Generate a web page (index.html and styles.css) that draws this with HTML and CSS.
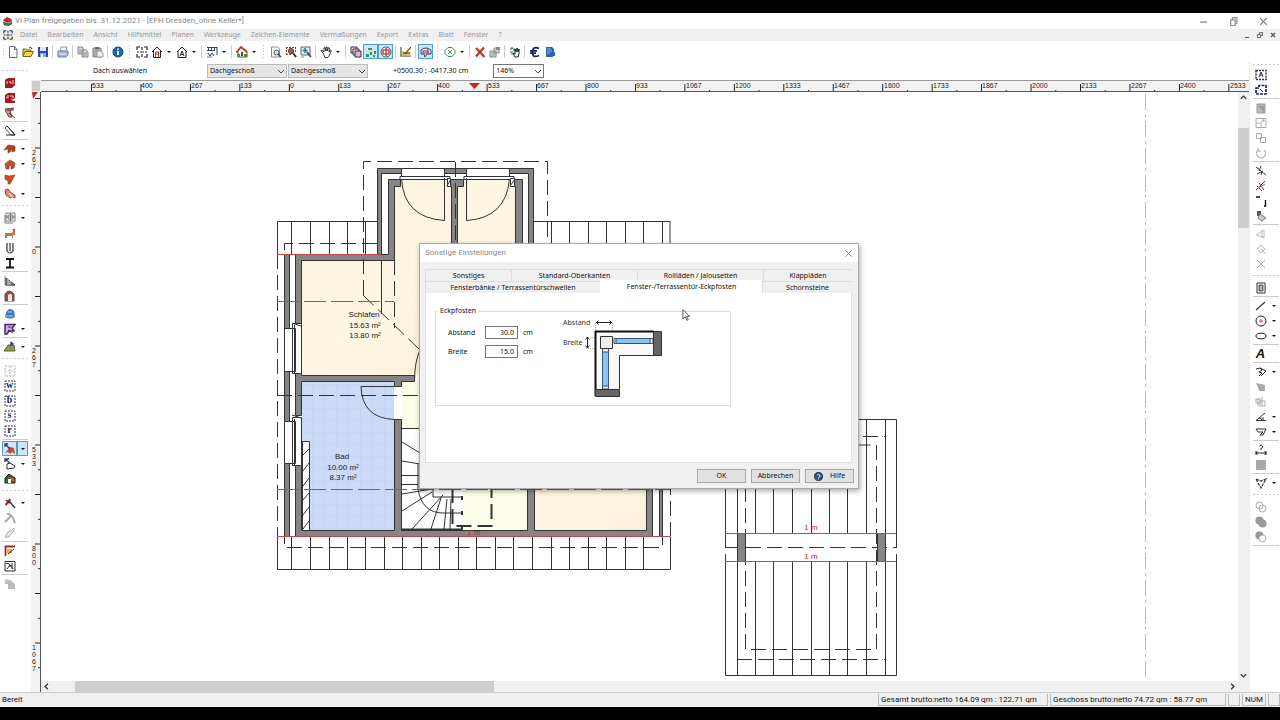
FILE: index.html
```html
<!DOCTYPE html>
<html lang="de">
<head>
<meta charset="utf-8">
<title>Vi Plan</title>
<link rel="stylesheet" href="styles.css">
</head>
<body>
<svg class="defs" aria-hidden="true">
  <symbol id="chev" viewBox="0 0 8 8"><path d="M1 3l3 3 3-3" fill="none" stroke="#444" stroke-width="1"/></symbol>
  <symbol id="page" viewBox="0 0 12 12"><path d="M2.500 .5h5l2.500 3v8h-7.500z" fill="#fff" stroke="#556a95"/><path d="M7.500 .5v3h2.500" fill="none" stroke="#556a95"/></symbol>
  <symbol id="dash" viewBox="0 0 12 12"><rect x="1" y="1" width="10" height="10" fill="#fff" stroke="#335" stroke-dasharray="2 1"/></symbol>
  <symbol id="plan" viewBox="0 0 12 12"><path d="M1 4V1h3M8 1h3v3M11 8v3H8M4 11H1V8M4 6h4M6 1v3M6 8v3M1 6h2M9 6h2" fill="none" stroke="#222" stroke-width="1.200"/></symbol>
</svg>

<div class="app">
  <header class="titlebar">
    <svg class="logo" viewBox="0 0 12 12"><path d="M1 5l4-4 5 2 1 3-4 1z" fill="#b63a2b"/><path d="M1 6l6 2 4-2v3l-4 2-5-1z" fill="#4c6b50"/><path d="M2 5l5 2" stroke="#333"/></svg>
    <h1 class="title">Vi Plan freigegeben bis: 31.12.2021 - [EFH Dresden_ohne Keller*]</h1>
    <div class="wincontrols">
      <button aria-label="Minimieren"><svg viewBox="0 0 8 8"><path d="M1 4.500h6" stroke="#777" fill="none"/></svg></button>
      <button aria-label="Wiederherstellen"><svg viewBox="0 0 8 8"><path d="M1.500 2.500h4v5h-4zM3 2.500v-2h4v5H5.500" stroke="#888" fill="none"/></svg></button>
      <button aria-label="Schließen"><svg viewBox="0 0 8 8"><path d="M1 1l6 6M7 1L1 7" stroke="#777" fill="none"/></svg></button>
    </div>
  </header>

  <nav class="menubar">
    <svg class="docicon"><use href="#plan"/></svg>
    <button>Datei</button><button>Bearbeiten</button><button>Ansicht</button><button>Hilfsmittel</button><button>Planen</button><button>Werkzeuge</button><button>Zeichen-Elemente</button><button>Vermaßungen</button><button>Export</button><button>Extras</button><button>Blatt</button><button>Fenster</button><button>?</button>
    <div class="childcontrols">
      <button aria-label="Dokument minimieren"><svg viewBox="0 0 8 8"><path d="M2 6.500h4" stroke="#556"/></svg></button>
      <button aria-label="Dokument wiederherstellen"><svg viewBox="0 0 8 8"><path d="M1.500 3.500h3v3h-3zM3.500 3V1.500h3v3H5" stroke="#667" fill="none"/></svg></button>
      <button aria-label="Dokument schließen"><svg viewBox="0 0 8 8"><path d="M2 2l4 4M6 2L2 6" stroke="#556" fill="none" stroke-width="1.300"/></svg></button>
    </div>
  </nav>

  <div class="toolbar" role="toolbar" aria-label="Standard">
    <i class="grip first"></i>
    <button class="t" aria-label="Neu"><svg><use href="#page"/></svg></button>
    <button class="t" aria-label="Öffnen"><svg viewBox="0 0 12 12"><path d="M1 10V3h3l1 1h4v2" fill="#e8d06a" stroke="#75651e"/><path d="M1 10.500l2-5h8.500l-2.500 5z" fill="#f3d94c" stroke="#75651e"/><path d="M7 2q2-2 3 1" fill="none" stroke="#333"/></svg></button>
    <button class="t" aria-label="Speichern"><svg viewBox="0 0 12 12"><path d="M1 1h10v10H1z" fill="#3347b4"/><path d="M3 1h6v4H3z" fill="#dfe6f5"/><path d="M3 7h6v4H3z" fill="#8fa3dc"/><path d="M4 8h2v3H4z" fill="#fff"/></svg></button>
    <i class="sep"></i>
    <button class="t" aria-label="Drucken"><svg viewBox="0 0 12 12"><path d="M4 1h6l-1 4H3z" fill="#fff" stroke="#8895ab"/><path d="M1 5h10v4l-2 2H1z" fill="#a9b6d2" stroke="#74819d"/><path d="M2 8h7" stroke="#eef"/></svg></button>
    <i class="sep"></i>
    <button class="t" aria-label="Kopieren"><svg viewBox="0 0 12 12"><path d="M1 1h4l1 1v6H1zM5 4h4l2 2v5H5z" fill="#ddd" stroke="#888"/><path d="M2 4h3M2 6h2M6 7h4M6 9h4" stroke="#888"/></svg></button>
    <button class="t" aria-label="Einfügen"><svg viewBox="0 0 12 12"><path d="M1 2h8v9H1z" fill="#aaa" stroke="#888"/><path d="M3 1h4v2H3z" fill="#666"/><path d="M5 5h4l2 2v4H5z" fill="#eee" stroke="#999"/></svg></button>
    <i class="sep"></i>
    <button class="t" aria-label="Info"><svg viewBox="0 0 12 12"><circle cx="6" cy="6" r="5" fill="#1768b4" stroke="#0e3f80"/><path d="M6 5v4M6 2.500v1.300" stroke="#fff" stroke-width="1.800"/></svg></button>
    <i class="grip"></i>
    <button class="t" aria-label="Grundriss"><svg><use href="#plan"/></svg></button>
    <button class="t" aria-label="Gebäude"><svg viewBox="0 0 12 12"><path d="M1 6l5-5 5 5M2.500 5v6.500h7V5" fill="none" stroke="#222"/><path d="M4.500 11V6h3v5M4.500 8h3" fill="none" stroke="#a33"/></svg></button><i class="dd"></i>
    <button class="t" aria-label="Ansicht A"><svg viewBox="0 0 12 12"><path d="M1 6l5-5 5 5M2 5v6.500h8V5" fill="none" stroke="#222"/><path d="M4 10l2-5 2 5M5 8.500h2" fill="none" stroke="#222"/></svg></button><i class="dd"></i>
    <i class="sep"></i>
    <button class="t" aria-label="Fensterliste"><svg viewBox="0 0 12 12"><path d="M1 1.500h10M1 4.500h8M2.500 2v3M5.500 2v3M8.500 2v3M11 1v8" stroke="#333d60" fill="none"/><path d="M2 7l2 3 2-3 2 3" stroke="#333d60" fill="none"/><path d="M1 11h5" stroke="#777"/></svg></button><i class="dd"></i>
    <i class="sep"></i>
    <button class="t" aria-label="3D Haus"><svg viewBox="0 0 12 12"><path d="M0 6l5-5 6 5v5H2V6z" fill="#fff" stroke="#833"/><path d="M1 6l4-5 6 5" fill="none" stroke="#b33a2b" stroke-width="1.800"/><path d="M1 8h3v3H1zM8 8h3v3H8z" fill="#3f9a3f"/><path d="M5 6h2v4H5z" fill="#6a4526"/></svg></button><i class="dd"></i>
    <i class="grip"></i>
    <button class="t" aria-label="Blatt zoomen"><svg viewBox="0 0 12 12"><path d="M1.500 1h6l2 2v8h-8z" fill="#fff" stroke="#889"/><circle cx="6.500" cy="6.500" r="2.500" fill="#cfe0ea" stroke="#456"/><path d="M8 8l3 3" stroke="#345" stroke-width="1.500"/></svg></button>
    <button class="t" aria-label="Bereich zoomen"><svg viewBox="0 0 12 12"><path d="M1 1.500h10M1 8.500h6M1.500 1v8M10.500 1v6" stroke="#a33" stroke-dasharray="2 1"/><circle cx="6" cy="5" r="2.500" fill="#b55" stroke="#522"/><path d="M8 7l3 4" stroke="#333" stroke-width="2"/></svg></button>
    <button class="t" aria-label="Alles zoomen"><svg viewBox="0 0 12 12"><path d="M1 1h9v8H1z" fill="#e5eef8" stroke="#567"/><path d="M5 2v5M2.500 4.500h5" stroke="#247d67" stroke-width="1.500"/><path d="M7 6l4 5" stroke="#334d9a" stroke-width="2"/><path d="M1 11h3" stroke="#a90"/></svg></button>
    <i class="sep"></i>
    <button class="t" aria-label="Verschieben"><svg viewBox="0 0 12 12"><path d="M3 7L1 4.500l1-.5 2 2V2l1-.5L6 5V1h1.200v4L8.500 1.500l1 .5-.5 4 1.500-2 .8.500L9 10l-1 1.500H5z" fill="#fff" stroke="#222" stroke-width=".9"/></svg></button><i class="dd"></i>
    <i class="sep"></i>
    <button class="t" aria-label="Ebenen"><svg viewBox="0 0 12 12"><path d="M1 1h6v6H1z" fill="#e6dbe6" stroke="#424"/><path d="M3 3h6v6H3z" fill="#f4eaf4" stroke="#424"/><path d="M5 5h6v6H5z" fill="#c9bdd5" stroke="#424"/></svg></button>
    <button class="t on" aria-label="Punkte"><svg viewBox="0 0 12 12"><path d="M3 2h4v2H3zM1 8h3v3H1zM5 6h2v3H5zM9 5h2v3H9zM8 9h2v2H8z" fill="#35965a"/></svg></button>
    <button class="t on" aria-label="Objektfang"><svg viewBox="0 0 12 12"><circle cx="6" cy="6" r="5" fill="#fff" stroke="#555"/><path d="M3 4h6v4H3zM6 2v8" fill="none" stroke="#a22" stroke-width="1.200"/></svg></button>
    <i class="sep"></i>
    <button class="t" aria-label="Farben"><svg viewBox="0 0 12 12"><path d="M1 1v9h10" fill="none" stroke="#777" stroke-width="1.500"/><path d="M2 9V5l3 1 5-5 1 1-4 5 4-1-1 4z" fill="#e1c348"/><path d="M5 8l6-7M3 7h7" stroke="#333"/></svg></button>
    <i class="sep"></i>
    <button class="t on" aria-label="Hilfslinien"><svg viewBox="0 0 12 12"><path d="M1 4q5-4 10 0v4H7L5 11 4 8H1z" fill="#dfe3ef" stroke="#334178"/><path d="M3 5h5v2H3zM8 3v5" fill="none" stroke="#a33"/></svg></button>
    <i class="grip"></i>
    <button class="t" aria-label="Prüfen"><svg viewBox="0 0 12 12"><path d="M4 1.500h4l3 3v3l-3 3H4l-3-3v-3z" fill="#fff" stroke="#3d9447"/><path d="M4 4l4 4M8 4L4 8" stroke="#3d9447"/></svg></button><i class="dd"></i>
    <i class="sep"></i>
    <button class="t" aria-label="Löschen"><svg viewBox="0 0 12 12"><path d="M2 2l8.500 9M10 1.500L2 10.500" stroke="#c3342b" stroke-width="2.200"/></svg></button>
    <button class="t" aria-label="Eigenschaften"><svg viewBox="0 0 12 12"><path d="M1 5h6v6H1zM5 2h5v5H5z" fill="#ddd" stroke="#888"/><path d="M7 1h4v3H7z" fill="#888"/><path d="M2 7h4M2 9h4" stroke="#999"/></svg></button>
    <i class="sep"></i>
    <button class="t" aria-label="Auswahl"><svg viewBox="0 0 12 12"><path d="M1 3h2M3 1v2M5 2v3M1 6h3M2 8h2" stroke="#367" stroke-width="1.200"/><path d="M6 11L4 7l2 1V3l1 3 1-4 1 4 1-3v5l-1 3z" fill="#fff" stroke="#222"/></svg></button>
    <i class="sep"></i>
    <button class="t" aria-label="Kosten"><svg viewBox="0 0 12 12"><path d="M10 2.500Q4-.5 3.500 6T10 9.500M1 4.800h7M1 7.200h6" fill="none" stroke="#20206f" stroke-width="1.800"/></svg></button>
    <button class="t" aria-label="Bericht"><svg viewBox="0 0 12 12"><path d="M2 1h6l2 2v3h1v4H9v1H2z" fill="#2d64ac"/><path d="M3 3h4M3 5h5M3 7h3" stroke="#8db3df"/></svg></button>
  </div>

  <main class="work">
    <aside class="side left" aria-label="Bauteile">
      <i class="vgrip"></i>
      <button class="v" aria-label="Geschoss 1"><svg viewBox="0 0 12 12"><path d="M1 3l3-2h7v7l-3 3H1z" fill="#a71822"/><path d="M3 4v3M5 5h2v2M9 3v4" stroke="#f4c9c9" fill="none"/></svg></button>
      <button class="v" aria-label="Geschoss 2"><svg viewBox="0 0 12 12"><path d="M1 3l3-2h7v5l-4 2 4 1v2H1z" fill="#a71822"/><path d="M2 5l2 1V3M6 4h3v2" stroke="#f4c9c9" fill="none"/></svg></button>
      <button class="v" aria-label="Treppenhaus"><svg viewBox="0 0 12 12"><path d="M1 2l9-1-4 3 2 6H5L2 5z" fill="#c8907a" stroke="#555"/><path d="M3 3l7 0M5 6l6 5" stroke="#7a2a20"/></svg></button>
      <i class="vsep"></i>
      <button class="v" aria-label="Wand"><svg viewBox="0 0 12 12"><path d="M1 3l2-2 7 7 1 2H7z" fill="#fff" stroke="#555"/><path d="M3 1l8 9H2" fill="none" stroke="#222"/></svg></button><i class="dd"></i>
      <i class="vsep"></i>
      <button class="v" aria-label="Dach"><svg viewBox="0 0 12 12"><path d="M0 7l4-5 7 1v5L8 9V6L6 9 4 10V6z" fill="#b53a23" stroke="#642" stroke-width=".6"/></svg></button><i class="dd"></i>
      <button class="v" aria-label="Gaube"><svg viewBox="0 0 12 12"><path d="M1 6l5-4 5 3-1 5-3 1V7l-2 1v3H2z" fill="#c5532b" stroke="#6c3420" stroke-width=".6"/></svg></button><i class="dd"></i>
      <button class="v" aria-label="Dachfläche"><svg viewBox="0 0 12 12"><path d="M1 2l4 1 6-1-5 9H4V8L1 6z" fill="#d24a20" stroke="#93300f" stroke-width=".6"/></svg></button>
      <button class="v" aria-label="Dachöffnung"><svg viewBox="0 0 12 12"><path d="M1 2l3-1 3 4 4 2v3l-3-1-2 1-4-3z" fill="#d48d78" stroke="#b04629"/><path d="M5 5l4 5" stroke="#fff"/></svg></button><i class="dd"></i>
      <i class="vgrip"></i>
      <button class="v" aria-label="Fenster"><svg viewBox="0 0 12 12"><path d="M2 1h9v8H2zM4 3h5v4H4zM6.500 1v8M2 5h9M1 3v8h8" fill="none" stroke="#777"/></svg></button><i class="dd"></i>
      <button class="v" aria-label="Möbel"><svg viewBox="0 0 12 12"><path d="M1 6h7l3-5v7H9v3H8V9H3v2H1z" fill="#b97a44"/><path d="M8 2h3v3z" fill="#ca3f27"/></svg></button>
      <button class="v" aria-label="Träger"><svg viewBox="0 0 12 12"><path d="M3 1v8q3 4 6 0V1M6 1v8" fill="none" stroke="#333" stroke-width="1.200"/></svg></button>
      <button class="v" aria-label="Stahlträger"><svg viewBox="0 0 12 12"><path d="M2 2h8M2 10.500h8M6 2v9" fill="none" stroke="#111" stroke-width="1.800"/></svg></button>
      <i class="vsep"></i>
      <button class="v" aria-label="Treppe"><svg viewBox="0 0 12 12"><path d="M1 1v9h10" stroke="#777" fill="none"/><path d="M2 10V3l9 7z" fill="#777" stroke="#444"/><path d="M4 10V4M6 10V6" stroke="#ddd"/></svg></button>
      <button class="v" aria-label="Kamin"><svg viewBox="0 0 12 12"><path d="M1 11V4q4-6 9 0v7z" fill="#a34c3b" stroke="#555"/><path d="M4 11V5q2-2 4 0v6z" fill="#f4eeee"/></svg></button>
      <i class="vsep"></i>
      <button class="v" aria-label="Bad"><svg viewBox="0 0 12 12"><path d="M3 3q3-4 7 0l1 6q-5 3-10 0l1-4z" fill="#3979be"/><path d="M4 4h4M2 8h7" stroke="#b4d3f0"/></svg></button>
      <button class="v" aria-label="Umriss"><svg viewBox="0 0 12 12"><path d="M1 1.500h10L8 5l2 3H5l-2 3H1z" fill="#c8b2d7" stroke="#4b2278" stroke-width="1.500"/><path d="M4 4h3M4 7l5 3" stroke="#4b2278"/></svg></button><i class="dd"></i>
      <i class="vsep"></i>
      <button class="v" aria-label="Gelände"><svg viewBox="0 0 12 12"><path d="M0 10l4-6h6l1 6z" fill="#8a9c45" stroke="#655d33"/><path d="M7 1l2 2-3 2M7 1v4" stroke="#4241a0" fill="none" stroke-width="1.500"/></svg></button><i class="dd"></i>
      <i class="vgrip"></i>
      <button class="v" aria-label="Raster"><svg viewBox="0 0 12 12"><path d="M1 1h10v10H1zM6 1v10M1 6h10" fill="none" stroke="#bbb" stroke-dasharray="2 1"/></svg></button>
      <button class="v key" aria-label="w"><svg><use href="#dash"/></svg><b>w</b></button>
      <button class="v key" aria-label="b"><svg><use href="#dash"/></svg><b>b</b></button>
      <button class="v key" aria-label="s"><svg><use href="#dash"/></svg><b>s</b></button>
      <button class="v key" aria-label="r"><svg><use href="#dash"/></svg><b>r</b></button>
      <i class="vsep"></i>
      <button class="v on" aria-label="Dach bearbeiten"><svg viewBox="0 0 12 12"><path d="M1 10l5-6 4 1 1 6-3-2-2 2-2-2z" fill="#cf4632"/><path d="M1 1l5 5M1 4V1h3" stroke="#26377c" stroke-width="1.300" fill="none"/></svg></button><i class="dd on"></i>
      <button class="v" aria-label="Fläche bearbeiten"><svg viewBox="0 0 12 12"><path d="M3 6l3-1 5 3-1 2-7 1z" fill="#fff" stroke="#333"/><path d="M1 1l5 4M1 4V1h4" stroke="#26377c" stroke-width="1.300" fill="none"/></svg></button><i class="dd"></i>
      <button class="v" aria-label="Haus"><svg viewBox="0 0 12 12"><path d="M1 5l4-4 6 4v5H1z" fill="#455c41" stroke="#222"/><path d="M4 6h3v4H4z" fill="#efd"/><path d="M7 5l3 3" stroke="#d55" stroke-width="2"/></svg></button>
      <i class="vgrip"></i>
      <button class="v" aria-label="Hammer"><svg viewBox="0 0 12 12"><path d="M1 7l5-6 1 3-5 5z" fill="#a52b25"/><path d="M6 5l5 6M2 3l4 3" stroke="#333" stroke-width="1.400"/></svg></button><i class="dd"></i>
      <button class="v" aria-label="Werkzeug"><svg viewBox="0 0 12 12"><path d="M1 10l6-6M3 2q5-1 8 9" fill="none" stroke="#aaa" stroke-width="2"/></svg></button>
      <button class="v" aria-label="Verbinden"><svg viewBox="0 0 12 12"><path d="M1 10l3-5 3-1 3-3v3L7 7l-2 3z" fill="#eee" stroke="#aaa"/></svg></button>
      <i class="vsep"></i>
      <button class="v" aria-label="Plan ändern"><svg viewBox="0 0 12 12"><path d="M1.500 11V1.500h9.500" stroke="#a42a1d" stroke-width="1.800" fill="none"/><path d="M3 4h5v4H3z" fill="#e9b43a"/><path d="M4 9l6-5" stroke="#333"/></svg></button>
      <button class="v" aria-label="Textrahmen"><svg viewBox="0 0 12 12"><path d="M1 1.500h10v9.500H1z" fill="#fff" stroke="#333"/><path d="M2 4q4-2 4 3M3 9l3-4 3 4M8 3v6" fill="none" stroke="#222"/></svg></button>
      <i class="vsep"></i>
      <button class="v" aria-label="Gruppe"><svg viewBox="0 0 12 12"><path d="M1 2h5l5 4v5H4V6H1z" fill="#bbb"/><path d="M2 1v4M4 1v3" stroke="#ccc"/></svg></button>
    </aside>

    <section class="center">
      <div class="controls">
        <span class="hint">Dach auswählen</span>
        <label class="pick"><select aria-label="Geschoss"><option>Dachgeschoß</option></select><svg><use href="#chev"/></svg></label>
        <label class="pick"><select aria-label="Sichtbares Geschoss"><option>Dachgeschoß</option></select><svg><use href="#chev"/></svg></label>
        <span class="coords">+0500.30 : -0417.30 cm</span>
        <label class="pick zoom"><select aria-label="Zoom"><option>146%</option></select><svg><use href="#chev"/></svg></label>
      </div>
      <div class="sheet">
        <div class="corner"></div>
        <svg class="hruler">
          <defs><pattern id="ht" x="50" y="0" width="49.450" height="12" patternUnits="userSpaceOnUse"><path d="M.5 3v9M25.200 9v3" stroke="#222" fill="none"/></pattern></defs>
          <rect x="5" width="100%" height="12" fill="url(#ht)"/>
          <g transform="translate(-40 7)"><text x="91">533</text><text x="140">400</text><text x="190">267</text><text x="239">133</text><text x="289">0</text><text x="338">133</text><text x="388">267</text><text x="437">400</text><text x="487">533</text><text x="536">667</text><text x="586">800</text><text x="635">933</text><text x="685">1067</text><text x="734">1200</text><text x="784">1333</text><text x="833">1467</text><text x="883">1600</text><text x="932">1733</text><text x="981">1867</text><text x="1031">2000</text><text x="1080">2133</text><text x="1130">2267</text><text x="1179">2400</text><text x="1229">2533</text></g>
          <path d="M428 2h11l-5.500 6z" fill="#c1272d"/>
        </svg>
        <svg class="vruler">
          <defs><pattern id="vt" x="0" y="6" width="10" height="49.500" patternUnits="userSpaceOnUse"><path d="M4 .5h6M7 25.200h3" stroke="#222" fill="none"/></pattern></defs>
          <rect width="10" height="100%" fill="url(#vt)"/>
          <path d="M1 0h6l-5 7z" fill="#b9323c"/>
          <g transform="translate(0 -92)"><text x="1" y="155">2</text><text x="1" y="162">6</text><text x="1" y="169">7</text><text x="1" y="254">0</text><text x="1" y="353">2</text><text x="1" y="360">6</text><text x="1" y="367">7</text><text x="1" y="452">5</text><text x="1" y="459">3</text><text x="1" y="466">3</text><text x="1" y="551">8</text><text x="1" y="558">0</text><text x="1" y="565">0</text><text x="1" y="650">1</text><text x="1" y="657">0</text><text x="1" y="664">6</text><text x="1" y="671">7</text></g>
        </svg>
        <svg class="drawing" role="img" aria-label="Grundriss Dachgeschoss">
          <defs>
            <linearGradient id="warm" x1="0" y1="0" x2="1" y2="1"><stop offset="0" stop-color="#fcf1dc"/><stop offset=".5" stop-color="#fdf6e3"/><stop offset="1" stop-color="#fbeed9"/></linearGradient>
            <pattern id="tile" width="12" height="12" patternUnits="userSpaceOnUse"><path d="M0 0h12v12H0z" fill="#cbdaf6"/><path d="M0 .5h12M.5 0v12" stroke="#c5d5f3" fill="none"/></pattern>
          </defs>
          <g transform="translate(-41 -92)">
            <path d="M302 260h92v-81h128v70h-90v126H302z" fill="url(#warm)"/>
            <path d="M302 381h92v150h-92z" fill="url(#tile)"/>
            <path d="M401 381h127v150H401z" fill="#fcfde9"/>
            <path d="M534 480h112v51H534z" fill="url(#warm)"/>
            <path d="M401 428h62v103h-62z" fill="#fff"/>
            <path d="M394 387h7v32h-7z" fill="#fff"/>

            <g class="ln">
              <path d="M277.500 254v-32.500h104M291.500 222v32M310.500 222v32M329.500 222v32M347.500 222v32M365.500 222v32"/>
              <path d="M533 221.500h137v30M551.500 222v30M569.500 222v30M588.500 222v30M606.500 222v30M625.500 222v30M643.500 222v30M662.500 222v30"/>
              <path d="M277.500 536v33.500h393v-33"/>
              <path d="M291.500 537v32M310.500 537v32M329.500 537v32M347.500 537v32M365.500 537v32M384.500 537v32M402.500 537v32M421.500 537v32M439.500 537v32M458.500 537v32M476.500 537v32M495.500 537v32M513.500 537v32M532.500 537v32M551.500 537v32M569.500 537v32M588.500 537v32M606.500 537v32M625.500 537v32M643.500 537v32"/>
              <path d="M381.500 180v134"/>
            </g>
            <g class="wall">
              <path d="M377.500 168.500h156v75h-5v-70h-147v82h-4z"/>
              <path d="M388.500 179.500h12v7h-6v74h-93v63h-6v-69h93z"/>
              <path d="M447.500 179.500h16v7h-6v60h-6v-60h-4z"/>
              <path d="M511.500 179.500h11v64h-7v-57h-4z"/>
              <path d="M284.500 254.500h5v74h-5zM284.500 371.500h5v50h-5zM284.500 463.500h5v73h-5z"/>
              <path d="M295.500 373.500v42h6v-34h93v5h7v-5h13v-6h-113v-2z"/>
              <path d="M295.500 465.500h6v65h93v-111h7v111h126v-50h7v50h112v-50h6v56h-357z"/>
              <path d="M659.500 480.500h3v56h-3z"/>
            </g>
            <g class="open">
              <path d="M401.500 168.500h43v9h-43zM466.500 168.500h43v9h-43z"/>
              <path d="M400 176.500h50v3h-50zM464 176.500h50v3h-50z"/>
              <path d="M447.500 178.500h3v8h-3zM510.500 178.500h4v8h-4zM447 186l4-7M510 186l5-7"/>
              <path d="M284.500 328.500h11v43h-11zM292.500 323.500h9v50h-9zM294.500 325v48M284.500 421.500h11v42h-11zM292.500 417.500h9v48h-9zM294.500 419v46M292 323l9 3M292 415l9 3"/>
              <path d="M302.500 441.500h7v89h-7zM303 455l6-6M303 471l6-8M303 486l6-8M303 500l6-7M303 515l6-8M303 529l6-8"/>
            </g>
            <g class="ln">
              <path d="M444.500 178v42.500Q404 218 401.500 179M466.500 178v42.500Q506 218 509.500 179"/>
              <path d="M394 386.500h-33Q362 418 394 419.500M414.500 381q0-20 6-32"/>
              <path d="M402 428.500h18M402 442l18 11M402 461l18 3M402 475.500h18M402 484.500h16M402 494l30-5M402 511l30-19M412 529l31-34M431 529l10-31M444 529l3-30M418 464v25q4 24 25 24h20M450 529l1-30M433 489v8h30"/>
              <path d="M401 529.500h62M462 496v4M462 511v4M462 526v4" stroke-width="2"/>
            </g>
            <g class="dashed">
              <path d="M363.500 295V161.500h184v85M455.500 162v90M377 243.500h-92.500v304h378v-60M277.500 254v283M394.500 260v68M363 295l57 55M277 395.500h143M662.500 250v-7M670.500 480v56"/>
              <path d="M452.500 488v38h39v-38" stroke-width="2"/>
            </g>
            <g class="red"><path d="M277 254.500h104M277 536.500h393"/><path d="M277 301.500h117M277 489.500h393" stroke-dasharray="22 5"/></g>

            <g class="ln">
              <path d="M725.500 533v-113.500h171v114M725.500 562v113.500h171v-114M737.500 420v255M755.500 420v113M773.500 420v113M792.500 420v113M811.500 420v113M829.500 420v113M847.500 420v113M866.500 420v113M885.500 420v255"/>
              <path d="M755.500 562v113M773.500 562v113M792.500 562v113M811.500 562v113M829.500 562v113M847.500 562v113M866.500 562v113"/>
            </g>
            <g class="dashed"><path d="M745.500 445v204.500h131v-204.500zM737 436.500h148M737 659.500h148M725 547.500h172M725.500 533v29M896.500 533v29"/></g>
            <g class="wall"><path d="M737.500 533.500h8v28h-8zM877.500 533.500h8v28h-8z"/></g>
            <g class="red"><path d="M725 533.500h171M725 561.500h171"/></g>
            <path d="M1145.500 94v590" fill="none" stroke="#bbb" stroke-dasharray="16 4 3 4"/>

            <g class="room"><text x="364" y="317">Schlafen</text><text x="365" y="328">15.63 m²</text><text x="365" y="338">13.80 m²</text><text x="342" y="459">Bad</text><text x="343" y="470">10.00 m²</text><text x="343" y="480">8.37 m²</text></g>
            <g class="room measure"><text x="474" y="535">1 m</text><text x="811" y="530">1 m</text><text x="811" y="559">1 m</text></g>
          </g>
        </svg>
        <div class="vscroll"><svg viewBox="0 0 8 8"><path d="M2 5l2-2 2 2" /></svg><i></i><svg viewBox="0 0 8 8"><path d="M2 3l2 2 2-2"/></svg></div>
        <div class="hscroll"><svg viewBox="0 0 8 8"><path d="M5 2L3 4l2 2"/></svg><i></i><svg viewBox="0 0 8 8"><path d="M3 2l2 2-2 2"/></svg></div>
      </div>
    </section>

    <aside class="side right" aria-label="Zeichnen">
      <i class="vgrip"></i>
      <button class="v" aria-label="Auswahl A"><svg viewBox="0 0 12 12"><path d="M1 1.500h10v9H1z" fill="none" stroke="#334" stroke-dasharray="2 1" stroke-width="1.500"/><path d="M4 8l2-5 2 5M5 6h3" fill="none" stroke="#334"/></svg></button>
      <button class="v" aria-label="Auswahl B"><svg viewBox="0 0 12 12"><path d="M1 4h3V1.500h7V10H1z" fill="none" stroke="#1b1b7b" stroke-dasharray="3 1" stroke-width="1.700"/><path d="M5 5l3 3" stroke="#1b1b7b"/></svg></button>
      <i class="vsep"></i>
      <button class="v" aria-label="Füllen"><svg viewBox="0 0 12 12"><path d="M2 2h8v9H2z" fill="#bbb" stroke="#999"/><path d="M3 4l6 6V4z" fill="#999"/></svg></button>
      <button class="v" aria-label="Skalieren"><svg viewBox="0 0 12 12"><path d="M1 1.500h10v9H1zM1 6h5v5M6 5l3-2M7 3h2v2" fill="none" stroke="#aaa"/></svg></button>
      <button class="v" aria-label="Duplizieren"><svg viewBox="0 0 12 12"><path d="M1.500 1.500h5v5h-5zM5.500 5.500h5v5h-5z" fill="#fff" stroke="#aaa"/></svg></button>
      <button class="v" aria-label="Drehen"><svg viewBox="0 0 12 12"><path d="M3 3a4.500 4.500 0 1 0 6 0M3 1v3h3" fill="none" stroke="#bbb" stroke-width="1.300"/></svg></button>
      <i class="vsep"></i>
      <button class="v" aria-label="Trimmen"><svg viewBox="0 0 12 12"><path d="M1 2l10 8M2 9l6-3M6 1l-2 5M6 10l1-4" fill="none" stroke="#333"/></svg></button>
      <button class="v" aria-label="Teilen"><svg viewBox="0 0 12 12"><path d="M1 10L10 1M4 3l5 7M2 6l5 5" fill="none" stroke="#444"/><path d="M3 8l7-4" stroke="#b55"/></svg></button>
      <button class="v" aria-label="Ecke"><svg viewBox="0 0 12 12"><path d="M1 2h4M10.500 5v6H9" fill="none" stroke="#111" stroke-width="1.400"/></svg></button>
      <button class="v" aria-label="Farbe"><svg viewBox="0 0 12 12"><path d="M2 1h4v5H2z" fill="#555"/><path d="M5 4l6 4-4 3-4-3z" fill="#ccc" stroke="#777"/></svg></button>
      <i class="vsep"></i>
      <button class="v" aria-label="Punkt"><svg viewBox="0 0 12 12"><path d="M1 7l8-5v8L2 7M7 2v8" fill="none" stroke="#bbb"/></svg></button>
      <button class="v" aria-label="Punkt ändern"><svg viewBox="0 0 12 12"><path d="M2 6l4-4 4 4-4 4zM6 6l5 5" fill="none" stroke="#bbb"/></svg></button>
      <button class="v" aria-label="Punkt löschen"><svg viewBox="0 0 12 12"><path d="M2 2l8 8M10 2l-8 8" fill="none" stroke="#aaa"/></svg></button>
      <i class="vgrip"></i>
      <button class="v" aria-label="Objekte"><svg viewBox="0 0 12 12"><path d="M2 1h8v10H2z" fill="#fff" stroke="#333"/><path d="M4 3h4v6H4z" fill="#aaa" stroke="#555"/></svg></button>
      <i class="vsep"></i>
      <button class="v" aria-label="Linie"><svg viewBox="0 0 12 12"><path d="M1 10l9-8" fill="none" stroke="#333" stroke-width="1.200"/></svg></button><i class="dd"></i>
      <button class="v" aria-label="Kreis"><svg viewBox="0 0 12 12"><circle cx="6" cy="6" r="5" fill="#fff" stroke="#222"/><path d="M6 4v4M4 6h4" stroke="#c55"/></svg></button><i class="dd"></i>
      <button class="v" aria-label="Ellipse"><svg viewBox="0 0 12 12"><ellipse cx="6" cy="6" rx="5" ry="2.800" fill="#fff" stroke="#222"/></svg></button><i class="dd"></i>
      <i class="vsep"></i>
      <button class="v letter" aria-label="Text"><b>A</b></button>
      <i class="vsep"></i>
      <button class="v" aria-label="Polygon"><svg viewBox="0 0 12 12"><path d="M1 3l4-1 2 2-3 2 3 1-3 3M5 2l6 3-5 5" fill="none" stroke="#222"/></svg></button><i class="dd"></i>
      <button class="v" aria-label="Schraffur"><svg viewBox="0 0 12 12"><path d="M1 2l5 1 4 1v6H4L3 6z" fill="#aaa"/></svg></button>
      <button class="v" aria-label="Muster"><svg viewBox="0 0 12 12"><path d="M1 3h4v4H1zM5 5h5v5H5zM7 1v9M3 2v8" fill="none" stroke="#aaa"/></svg></button>
      <button class="v" aria-label="Winkel"><svg viewBox="0 0 12 12"><path d="M10 2L1 9.500h10M4 7q3 0 3 3M8 6v3" fill="none" stroke="#333"/></svg></button><i class="dd"></i>
      <button class="v" aria-label="Fläche"><svg viewBox="0 0 12 12"><path d="M1 3h10L8 9H5l3-3H3z" fill="none" stroke="#333"/></svg></button><i class="dd"></i>
      <i class="vsep"></i>
      <button class="v" aria-label="Bemaßung"><svg viewBox="0 0 12 12"><path d="M1 7v4M11 7v4M1 9h10M2.500 7.500L1 9l1.500 1.500M9.500 7.500L11 9l-1.500 1.500M4.500 2q2-2 3 0t-1.500 2.500V6" fill="none" stroke="#222"/></svg></button>
      <button class="v" aria-label="Grau"><svg viewBox="0 0 12 12"><path d="M1 1h10v10H1z" fill="#aaa"/></svg></button>
      <i class="vsep"></i>
      <button class="v" aria-label="Messen"><svg viewBox="0 0 12 12"><path d="M1 2l5 2 5-2-3 5-2 4-3-5z" fill="none" stroke="#333" stroke-width="1.200" stroke-dasharray="3 1"/></svg></button><i class="dd"></i>
      <i class="vgrip"></i>
      <button class="v" aria-label="Schnittmenge"><svg viewBox="0 0 12 12"><circle cx="4.500" cy="4.500" r="3.500" fill="none" stroke="#aaa"/><circle cx="7.500" cy="7.500" r="3.500" fill="none" stroke="#aaa"/></svg></button>
      <button class="v" aria-label="Vereinigung"><svg viewBox="0 0 12 12"><circle cx="4.500" cy="4.500" r="4" fill="#999"/><circle cx="7.500" cy="7.500" r="4" fill="#999"/></svg></button>
      <button class="v" aria-label="Differenz"><svg viewBox="0 0 12 12"><circle cx="4.500" cy="4.500" r="4" fill="#999"/><circle cx="7.500" cy="7.500" r="3.500" fill="#fff" stroke="#aaa"/></svg></button>
      <i class="vsep"></i>
    </aside>
  </main>

  <footer class="status">
    <span class="ready">Bereit</span>
    <span class="cell total">Gesamt brutto:netto 164.09 qm : 122.71 qm</span>
    <span class="cell floor">Geschoss brutto:netto 74.72 qm : 58.77 qm</span>
    <span class="cell blank"></span>
    <span class="cell">NUM</span>
    <span class="cell blank"></span>
  </footer>

  <form class="dialog" role="dialog" aria-labelledby="dlg">
    <div class="dlghead"><h2 id="dlg">Sonstige Einstellungen</h2><button type="button" aria-label="Schließen"><svg viewBox="0 0 8 8"><path d="M.5 .5l7 7M7.500 .5l-7 7" stroke="#777" fill="none"/></svg></button></div>
    <div class="tabs one" role="tablist"><button type="button" role="tab">Sonstiges</button><button type="button" role="tab">Standard-Oberkanten</button><button type="button" role="tab">Rollläden / Jalousetten</button><button type="button" role="tab">Klappläden</button></div>
    <div class="tabs two" role="tablist"><button type="button" role="tab">Fensterbänke / Terrassentürschwellen</button><button type="button" role="tab" class="active" aria-selected="true">Fenster-/Terrassentür-Eckpfosten</button><button type="button" role="tab">Schornsteine</button></div>
    <div class="panel">
      <fieldset>
        <legend>Eckpfosten</legend>
        <div class="fields">
          <label for="abstand">Abstand</label><input id="abstand" value="30.0"><span>cm</span>
          <label for="breite">Breite</label><input id="breite" value="15.0"><span>cm</span>
        </div>
        <svg class="post" viewBox="0 0 104 82" role="img" aria-label="Eckpfosten Skizze">
          <text x="1" y="9">Abstand</text><text x="1" y="29">Breite</text>
          <path d="M34 6.500h16M36.500 4.500l-2 2 2 2M47.500 4.500l2 2-2 2M25.500 21v11M23.500 23.500l2-2.500 2 2.500M23.500 29.500l2 2.500 2-2.500" fill="none" stroke="#222"/>
          <path d="M33.500 5v10M50.500 5v16M24 21.500h14M24 32.500h14" stroke="#aaa" stroke-dasharray="1 1"/>
          <path d="M33.500 16h58v24h-34v33h-24z" fill="#f8f8f8"/>
          <path d="M33 15.500h59M33.500 15v65" stroke="#111" stroke-width="2"/>
          <path d="M92 39.500H57.500V73" stroke="#333" fill="none"/>
          <path d="M52 22.500h39v5H52zM40.500 32h6v41h-6z" fill="#dfeaf5" stroke="#456"/>
          <path d="M54 22.500h34v5H54zM40.500 36h6v34h-6z" fill="#8ec3ee" stroke="#357"/>
          <path d="M38.500 20.500h12v12h-12z" fill="#eee" stroke="#333"/>
          <path d="M91.500 15.500h8v24h-8zM33.500 73.500h24v7h-24z" fill="#666" stroke="#333"/>
        </svg>
      </fieldset>
    </div>
    <div class="actions"><button type="button">OK</button><button type="button">Abbrechen</button><button type="button"><svg viewBox="0 0 10 10"><circle cx="5" cy="5" r="4.500" fill="#25558c" stroke="#1b2a4a"/><path d="M1 6q1 3 4 3" stroke="#3b8b4c" fill="none"/><path d="M3.500 3.500q1.500-1.500 3 0T5 6v.5M5 7.200v1" stroke="#fff" fill="none"/></svg>Hilfe</button></div>
  </form>
  <svg class="cursor" viewBox="0 0 10 14"><path d="M1 1v10.500l2.500-2.500 2 4 1.500-1-2-3.500h3.500z" fill="#fff" stroke="#444"/></svg>
</div>
</body>
</html>
```
FILE: styles.css
```css
* { box-sizing: border-box; }
body { margin: 0; background: #000; font-family: "Noto Sans", "Open Sans", sans-serif; font-size: 7px; line-height: 10px; color: #111; }
button { margin: 0; padding: 0; border: 0; background: none; font: inherit; color: inherit; display: flex; align-items: center; justify-content: center; }
h1, h2 { margin: 0; font-weight: normal; }
.defs { position: absolute; width: 0; height: 0; }
.app { position: relative; display: flex; flex-direction: column; height: 100vh; padding: 13px 0; background: #000; }
.app > * { flex: none; }

.titlebar { display: flex; align-items: center; height: 16px; padding: 0 12px 0 2px; background: #fff; color: #888; }
.logo { width: 11px; height: 11px; margin-right: 2px; }
.title { flex: 1; white-space: nowrap; }
.title, .dlghead h2, .status { font: 8px/10px Roboto, "Noto Sans", sans-serif; }
.wincontrols { display: flex; gap: 21px; }
.wincontrols svg { width: 9px; height: 9px; display: block; }

.menubar { display: flex; align-items: center; gap: 10px; height: 12px; padding: 0 3px; background: #f0f0f0; color: #999; }
.docicon { width: 10px; height: 10px; margin-right: -3px; }
.childcontrols { display: flex; gap: 5px; margin-left: auto; }
.childcontrols svg { width: 8px; height: 8px; display: block; }

.toolbar { display: flex; align-items: center; height: 21px; padding-left: 1px; background: #fff; }
.t, .v { width: 15px; height: 15px; flex: none; }
.t svg, .v svg { width: 12px; height: 12px; display: block; }
.on { background: #cce6f8; box-shadow: inset 0 0 0 1px #4d9ed0; }
.sep { width: 5px; height: 13px; background: linear-gradient(#ccc, #ccc) center / 1px 100% no-repeat; }
.grip { width: 9px; height: 13px; background: radial-gradient(#bbb 1px, transparent 1px) center / 3px 3px repeat-y; }
.grip.first { width: 4px; }
.dd { display: flex; width: 10px; height: 15px; align-items: center; justify-content: center; }
.dd::after { content: ""; border: 2px solid transparent; border-top-color: #111; border-bottom: 0; }

.app > .work { flex: 1; display: flex; min-height: 0; background: #fff; }
.side { display: flex; flex-flow: row wrap; align-content: flex-start; width: 30px; padding: 4px 2px 0; }
.vgrip, .vsep { flex: 0 0 26px; height: 9px; background: linear-gradient(90deg, #ccc 50%, transparent 50%) 0 50% / 4px 1px repeat-x; }
.vsep { height: 3px; background: linear-gradient(#ccc, #ccc) 0 50% / 100% 1px no-repeat; }
.right .vgrip:first-child { height: 5px; }
.right { width: 31px; padding: 0 1px 0 3px; border-left: 1px dotted #ddd; }
.side .v + .dd { width: 11px; }
.v:not(:has(+ .dd)) { margin-right: 10px; }
.key { position: relative; }
.key b { position: absolute; inset: 0; font: bold 10px/13px "Liberation Serif", serif; color: #17175f; text-align: center; }
.letter b { font: italic bold 13px/15px "Liberation Sans", sans-serif; }

.center { flex: 1; min-width: 0; display: flex; flex-direction: column; }
.controls { display: flex; align-items: center; height: 18px; }
.hint { width: 177px; padding-left: 63px; white-space: nowrap; }
.pick { position: relative; display: flex; width: 80px; height: 14px; margin-right: 1px; }
.pick select { appearance: none; width: 100%; border: 1px solid #bbb; border-radius: 0; background: #e6e6e6; font: inherit; color: inherit; padding: 0 2px; }
.pick svg { position: absolute; right: 2px; top: 3px; width: 8px; height: 8px; pointer-events: none; }
.coords { padding: 0 25px 0 24px; white-space: nowrap; }
.zoom { width: 51px; }
.zoom select { background: #fff; border-color: #777; }

.sheet { flex: 1; min-height: 0; display: grid; grid-template: 12px 1fr 11px / 10px 1fr 11px; padding-left: 1px; }
.corner { background: #ccc; border: 1px solid #eee; }
.hruler { grid-column: 2 / 4; width: 100%; height: 12px; background: #f2f2f2; border-top: 1px solid #999; border-bottom: 1px solid #555; }
.vruler { grid-row: 2 / 4; width: 10px; height: 100%; background: #f2f2f2; border-right: 1px solid #555; }
.hruler text, .vruler text { font: 7px "Liberation Sans", sans-serif; fill: #222; }
.drawing { width: 100%; height: 100%; background: #fff; }
.vscroll, .hscroll { display: flex; background: #f0f0f0; }
.vscroll { flex-direction: column; align-items: center; }
.hscroll { grid-column: 2 / 4; align-items: center; padding-right: 11px; }
.vscroll svg, .hscroll svg { width: 11px; height: 11px; fill: none; stroke: #333; stroke-width: 1; }
.vscroll i { width: 100%; height: 17%; margin: 25px 0 auto; background: #cdcdcd; }
.hscroll i { width: 35%; height: 100%; margin: 0 auto 0 23px; background: #cdcdcd; }

.ln, .open, .wall { fill: none; stroke: #333; }
.wall { fill: #858585; }
.open { fill: #fff; }
.dashed { fill: none; stroke: #333; stroke-dasharray: 15 6; }
.red { fill: none; stroke: #c34646; }
.room text { font: 8px "Liberation Sans", sans-serif; text-anchor: middle; fill: #222; }
.measure text { fill: #c22; }

.status { display: flex; align-items: center; height: 15px; padding-left: 2px; background: #f0f0f0; border-top: 1px solid #ccc; gap: 2px; }
.ready { flex: 1; }
.cell { height: 12px; padding: 1px 2px 0; border: 1px solid #bbb; border-top: 0; white-space: nowrap; }
.total { width: 170px; }
.floor { width: 176px; }
.blank { width: 12px; }

.app > .dialog { position: absolute; left: 419px; top: 243px; width: 440px; display: flex; flex-direction: column; padding: 0 6px 5px 5px; background: #f0f0f0; border: 1px solid #aaa; box-shadow: 1px 2px 5px rgba(0,0,0,.35); }
.dlghead { display: flex; align-items: center; justify-content: space-between; height: 18px; margin: 0 -6px 7px -5px; padding: 0 6px 0 5px; background: #fff; color: #888; }
.dlghead svg { width: 7px; height: 7px; display: block; }
.tabs { display: grid; height: 12px; }
.one { grid-template-columns: 86fr 126fr 126fr 89fr; }
.two { grid-template-columns: 175fr 162fr 90fr; }
.tabs button { border: 1px solid #ddd; border-width: 1px 0 0 1px; white-space: nowrap; }
.tabs .active { background: #fff; border-color: #fff; margin-top: -1px; padding-bottom: 1px; }
.panel { height: 170px; padding: 13px 9px; background: #fff; border: 1px solid #e2e2e2; border-top: 0; }
fieldset { display: flex; gap: 29px; width: 296px; height: 100px; margin: 0; padding: 0 0 0 12px; border: 1px solid #ddd; }
legend { margin-left: -10px; padding: 0 2px; }
.fields { display: grid; grid-template: 13px 13px / 32px 33px auto; gap: 6px 5px; align-content: start; align-items: center; padding-top: 10px; }
.fields input { width: 100%; height: 13px; border: 1px solid #777; padding: 0 3px; font: inherit; text-align: right; background: #fff; color: inherit; }
.post { width: 104px; height: 82px; }
.post text { font-size: 7px; fill: #333; }
.actions { display: flex; justify-content: flex-end; gap: 5px; margin: 6px -2px 0 0; }
.actions button { width: 49px; height: 14px; border: 1px solid #aaa; background: #e1e1e1; gap: 7px; }
.actions svg { width: 9px; height: 9px; }
.cursor { position: absolute; left: 682px; top: 308px; width: 9px; height: 14px; }
```
